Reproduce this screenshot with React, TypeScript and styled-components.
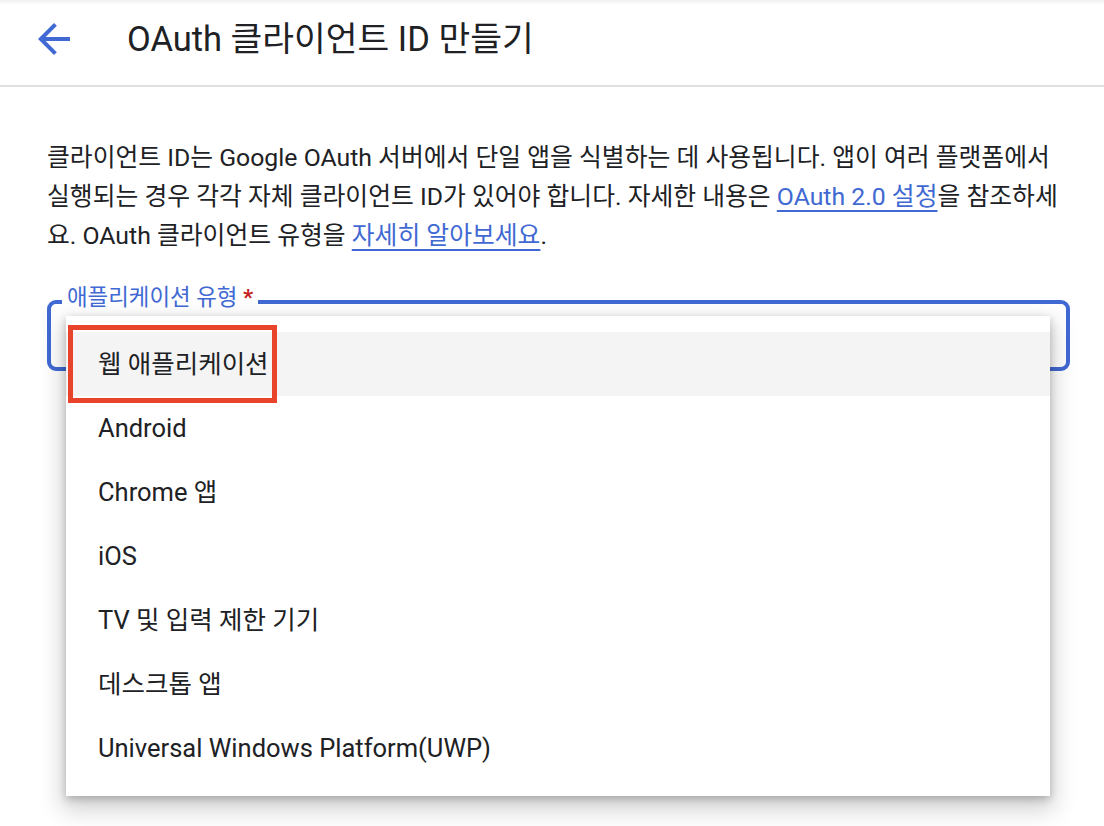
import React from "react";
import styled, { createGlobalStyle } from "styled-components";

const GlobalStyle = createGlobalStyle`
  html, body {
    margin: 0;
    padding: 0;
    background: #ffffff;
  }
  body {
    font-family: Roboto, "Noto Sans CJK KR", "Noto Sans", sans-serif;
    color: #202124;
    -webkit-font-smoothing: antialiased;
  }
`;

const BLUE = "#4169d3";

const Page = styled.div`
  width: 1104px;
  height: 826px;
  overflow: hidden;
  background: #fff;
`;

const Header = styled.header`
  display: flex;
  align-items: center;
  gap: 49px;
  height: 77px;
  padding: 0 0 8px 30px;
  border-bottom: 2px solid #e0e0e0;
  box-shadow: inset 0 6px 6px -6px rgba(0, 0, 0, 0.12);
`;

const BackButton = styled.button`
  display: flex;
  align-items: center;
  justify-content: center;
  width: 48px;
  height: 48px;
  padding: 0;
  border: none;
  background: transparent;
  color: ${BLUE};
  cursor: pointer;
  svg {
    width: 48px;
    height: 48px;
    fill: currentColor;
  }
`;

const Title = styled.h1`
  margin: 0;
  font-size: 34.5px;
  font-weight: 400;
  line-height: 42px;
  color: #202124;
`;

const Content = styled.main`
  padding: 51px 20px 0 47px;
`;

const Intro = styled.p`
  margin: 0;
  font-size: 24.8px;
  line-height: 39px;
  white-space: nowrap;
  color: #202124;
`;

const Link = styled.a`
  color: ${BLUE};
  text-decoration: underline;
  text-decoration-thickness: 2px;
  text-underline-offset: 5px;
`;

const Field = styled.div`
  position: relative;
  margin-top: 45px;
  width: 1023px;
  height: 71px;
  box-sizing: border-box;
  border: 4px solid ${BLUE};
  border-radius: 9px;
`;

const Label = styled.span`
  position: absolute;
  left: 11px;
  top: -20px;
  padding: 0 5px;
  background: #fff;
  font-size: 22.4px;
  line-height: 26px;
  color: ${BLUE};
`;

const Required = styled.span`
  color: #c5221f;
  font-weight: 700;
`;

const Menu = styled.ul`
  position: absolute;
  left: 15px;
  top: 12px;
  z-index: 2;
  width: 984px;
  margin: 0;
  padding: 16px 0;
  list-style: none;
  background: #fff;
  box-shadow: 0 10px 22px 4px rgba(0, 0, 0, 0.18),
    0 3px 8px rgba(0, 0, 0, 0.22);
`;

const Item = styled.li<{ $active?: boolean }>`
  display: flex;
  align-items: center;
  height: 64px;
  padding-left: 32px;
  font-size: 25.5px;
  line-height: 30px;
  color: #202124;
  background: ${(p) => (p.$active ? "#f4f4f4" : "transparent")};
`;

const Highlight = styled.div`
  position: absolute;
  left: 2px;
  top: 9px;
  width: 209px;
  height: 78px;
  box-sizing: border-box;
  border: 5px solid #e8442b;
  pointer-events: none;
`;

const options = [
  "웹 애플리케이션",
  "Android",
  "Chrome 앱",
  "iOS",
  "TV 및 입력 제한 기기",
  "데스크톱 앱",
  "Universal Windows Platform(UWP)",
];

export default function App() {
  return (
    <Page>
      <GlobalStyle />
      <Header>
        <BackButton aria-label="뒤로">
          <svg viewBox="0 0 24 24">
            <path d="M20 11H7.83l5.59-5.59L12 4l-8 8 8 8 1.41-1.41L7.83 13H20v-2z" />
          </svg>
        </BackButton>
        <Title>OAuth 클라이언트 ID 만들기</Title>
      </Header>
      <Content>
        <Intro>
          클라이언트 ID는 Google OAuth 서버에서 단일 앱을 식별하는 데 사용됩니다. 앱이 여러 플랫폼에서
          <br />
          실행되는 경우 각각 자체 클라이언트 ID가 있어야 합니다. 자세한 내용은{" "}
          <Link href="#">OAuth 2.0 설정</Link>을 참조하세
          <br />
          요. OAuth 클라이언트 유형을 <Link href="#">자세히 알아보세요</Link>.
        </Intro>
        <Field>
          <Label>
            애플리케이션 유형 <Required>*</Required>
          </Label>
          <Menu>
            {options.map((o, i) => (
              <Item key={o} $active={i === 0}>
                {o}
              </Item>
            ))}
            <Highlight />
          </Menu>
        </Field>
      </Content>
    </Page>
  );
}
